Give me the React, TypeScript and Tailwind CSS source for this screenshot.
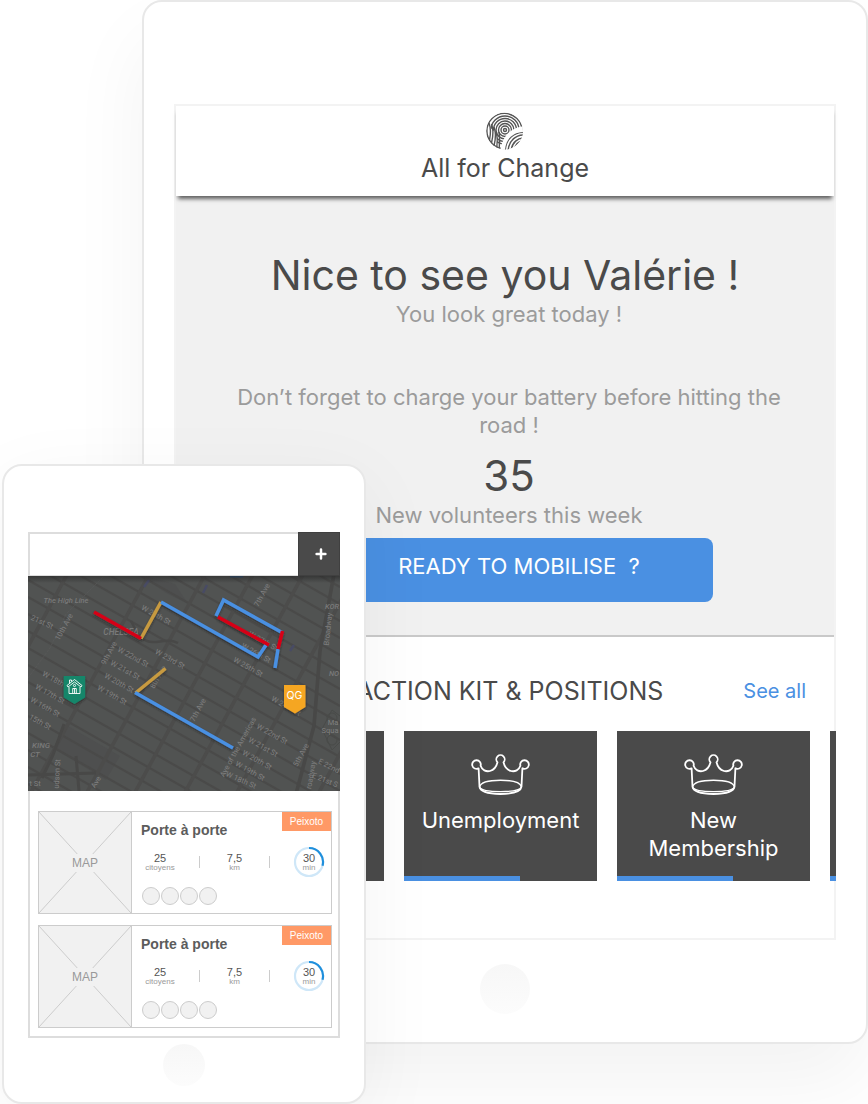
import React from "react";

const ui = "font-['Inter','Liberation_Sans',sans-serif]";

function FingerprintLogo() {
  return (
    <svg viewBox="0 0 38 38" className="h-[38px] w-[38px]" fill="none" aria-hidden="true">
      <defs>
        <clipPath id="disc">
          <circle cx="18.5" cy="19" r="18.5" />
        </clipPath>
        <clipPath id="upper">
          <path d="M0 0 H38 V16 C26 17 17 23 15 40 H11 V22 L0 12 Z" />
        </clipPath>
        <clipPath id="lobe">
          <path d="M38 20 C28 20 20 26 19 38 L38 38 Z" />
        </clipPath>
      </defs>
      <g clipPath="url(#disc)" stroke="#555" strokeWidth="1.4">
        <g clipPath="url(#upper)">
          {[1.5, 4, 6.5, 9, 11.5, 14].map((r) => (
            <circle key={r} cx="19" cy="18" r={r} />
          ))}
        </g>
        <circle cx="18.5" cy="19" r="17.6" />
        <path d="M3 11 C4.5 15 4.5 23 3.5 28 M5.5 12 C7.5 17 7 25 5.5 31 M8 15 C10 20 9.5 28 8 34 M10.5 20 C11.5 25 11.5 30 10.8 36 M13 20 C14 26 13.5 30 13.2 37" />
        <path d="M40 15 C26 16 17 23 15 40 L40 40 Z" fill="#fff" stroke="#fff" strokeWidth="2" />
        <g clipPath="url(#lobe)">
          <path d="M38 20 C28 20 20 26 19 38" strokeWidth="2" />
          <path d="M38 23 C30 23 23 28 22 39 M38 26 C32 26 26 30 25 39 M38 29 C33 29 29 32 28 39" />
        </g>
      </g>
    </svg>
  );
}

function Crown() {
  return (
    <svg viewBox="0 0 60 42" className="h-[42px] w-[60px]" fill="none" stroke="#fff" strokeWidth="1.8" strokeLinejoin="round" aria-hidden="true">
      <path d="M7.6 14.3 A4.3 4.3 0 1 1 9.6 11.8 C11 16 15 18 19 17 C23 16 25.5 12.5 26.5 8.3 A4.2 4.2 0 1 1 32.5 8.3 C33.5 12.5 36 16 40 17 C44 18 48 16 49.4 11.8 A4.3 4.3 0 1 1 51.4 14.3 L50.5 32.5 C50 37.5 41 40 29.5 40 C18 40 9 37.5 8.5 32.5 Z" />
      <path d="M8.5 33 C9.5 28.5 18 26.2 29.5 26.2 C41 26.2 49.5 28.5 50.5 33 C49 36.5 41 37.6 29.5 37.6 C18 37.6 10 36.5 8.5 33 Z" strokeWidth="1.4" />
    </svg>
  );
}

function KitCard({ label }: { label?: string }) {
  return (
    <article className="flex h-[150px] w-[193px] shrink-0 flex-col items-center bg-[#4a4a4a] pt-[23px]">
      <Crown />
      <p className="mt-[10px] w-full text-center text-[22px] leading-7 text-white whitespace-pre-line">{label}</p>
      <div className="mt-auto h-[5px] w-full">
        <div className="h-full w-3/5 bg-[#4a90e2]" />
      </div>
    </article>
  );
}

function Tablet() {
  return (
    <main className={`col-start-1 row-start-1 ml-[142px] flex h-fit flex-col items-center rounded-[20px] border-2 border-[#e8e8e8] bg-white px-[30px] pt-[102px] pb-7 text-[#4a4a4a] shadow-[0_40px_80px_rgba(0,0,0,0.05)] ${ui}`}>
      <div className="w-full border-2 border-[#f3f3f3]">
        <header className="relative flex h-[90px] flex-col items-center bg-white pt-[6px] shadow-[0_5px_4px_-2px_rgba(0,0,0,0.6)]">
          <FingerprintLogo />
          <p className="mt-[2px] text-[25px] leading-8">All for Change</p>
        </header>

        <section className="flex flex-col items-center border-b-2 border-[#c9c9c9] bg-[#f1f1f1] pt-[54px] pb-[33px] text-center text-[22px] leading-7 text-[#9b9b9b]">
          <h1 className="text-[41px] leading-[50px] text-[#4a4a4a]">Nice to see you Valérie !</h1>
          <p className="pl-2">You look great today !</p>
          <p className="mt-[55px] max-w-[590px] pl-2">Don’t forget to charge your battery before hitting the road !</p>
          <p className="mt-3 pl-2 text-[42px] leading-[50px] text-[#4a4a4a]">35</p>
          <p className="pl-2">New volunteers this week</p>
          <button className="mt-[9px] h-16 w-[416px] rounded-lg bg-[#4a90e2] pb-2 pl-7 text-[22px] whitespace-pre text-white">
            {"READY TO MOBILISE  ?"}
          </button>
        </section>

        <section className="h-[301px] bg-white pt-10">
          <div className="flex items-center justify-end gap-20 pr-7">
            <h2 className="text-[25px] leading-7">ACTION KIT &amp; POSITIONS</h2>
            <a href="#all" className="text-xl leading-7 text-[#4a90e2]">See all</a>
          </div>
          <div className="-mr-[2px] mt-[26px] flex justify-start gap-5 overflow-hidden pl-[15px]">
            <KitCard />
            <KitCard label="Unemployment" />
            <KitCard label={"New\nMembership"} />
            <KitCard />
          </div>
        </section>
      </div>
      <button aria-label="Tablet home" className="mt-6 h-[50px] w-[50px] rounded-full bg-linear-to-b from-[#f7f7f7] to-[#fcfcfc]" />
    </main>
  );
}

type Label = [string, number, number, number];

const streetLabels: Label[] = [
  ["21st St", 14, 46, 24],
  ["10th Ave", 36, 51, -62],
  ["W 24th St", 128, 39, 29],
  ["9th Ave", 81, 77, -62],
  ["W 22nd St", 105, 81, 29],
  ["W 23rd St", 142, 83, 29],
  ["W 21st St", 97, 94, 29],
  ["W 20th St", 91, 107, 29],
  ["W 19th St", 84, 119, 29],
  ["8th Ave", 130, 101, -60],
  ["W 18th St", 29, 105, 29],
  ["W 17th St", 22, 118, 29],
  ["W 16th St", 17, 131, 29],
  ["15th St", 12, 146, 29],
  ["udson St", 29, 198, -87],
  ["t St", 7, 207, 0],
  ["Ave", 68, 206, -60],
  ["7th Ave", 234, 19, -62],
  ["Broadway", 300, 53, -84],
  ["W 27th St", 235, 65, 29],
  ["W 26th St", 228, 77, 29],
  ["W 25th St", 220, 91, 29],
  ["W 24th St", 258, 130, 29],
  ["7th Ave", 170, 134, -62],
  ["Ave of the Americas", 210, 171, -61],
  ["W 22nd St", 244, 158, 29],
  ["W 21st St", 235, 171, 29],
  ["W 20th St", 229, 184, 29],
  ["W 19th St", 222, 195, 29],
  ["W 18th St", 213, 204, 24],
  ["5th Ave", 273, 179, -62],
  ["roadway", 283, 199, -80],
  ["E 22nd", 301, 190, 27],
  ["E 21st S", 297, 204, 22],
];

const areaLabels: [string, number, number, number][] = [
  ["The High Line", 38, 24, 7.5],
  ["CHELSEA", 93, 56, 8.5],
  ["KOR", 304, 30, 7.5],
  ["NO", 306, 97, 7.5],
  ["KING", 13, 169, 8],
  ["CT", 7, 178, 8],
];

const avenues = [-20, 62, 118, 166, 216, 268, 350, 404];

function RouteMap() {
  return (
    <svg viewBox="0 0 312 215" className="block w-full" role="img" aria-label="Route map" fontFamily="Roboto, 'Liberation Sans', sans-serif">
      <defs>
        <linearGradient id="mapTop" x1="0" y1="0" x2="0" y2="1">
          <stop offset="0" stopColor="#222" stopOpacity=".55" />
          <stop offset="1" stopColor="#222" stopOpacity="0" />
        </linearGradient>
        <filter id="drop" x="-20%" y="-20%" width="140%" height="150%">
          <feDropShadow dx="0" dy="1.5" stdDeviation="1" floodColor="#222" floodOpacity=".6" />
        </filter>
      </defs>
      <rect width="312" height="215" fill="#515352" />
      <path d="M110 -2 L147 8 L160 28 L138 17 Z M40 150 L92 180 L78 204 L28 174 Z" fill="#4e4f4f" />
      <g stroke="#4a4a49" strokeWidth="2.2">
        {Array.from({ length: 24 }, (_, i) => {
          const y = -166 + i * 17;
          return <line key={y} x1="0" y1={y} x2="312" y2={y + 177} />;
        })}
      </g>
      <g stroke="#4c4c4b" strokeWidth="3.6" fill="none">
        {avenues.map((x) => (
          <line key={x} x1={x - 61} y1="220" x2={x + 61} y2="-5" />
        ))}
        <path d="M306 -2 L292 75 L286 150 L268 218" stroke="#484847" />
        <path d="M103 45 C108 54 110 62 119 65 C128 69 138 61 150 67" strokeWidth="2.5" stroke="#484847" />
        <path d="M14 202 L25 179 L36 148 M0 199 L68 197 M48 180 L51 215" strokeWidth="3" stroke="#484847" />
      </g>
      <path d="M0 102 L22 72 L38 38 L76 0" stroke="#5a5b5a" strokeWidth=".6" strokeDasharray="3 1" fill="none" />
      <g stroke="#484b64" strokeWidth="2.5">
        <path d="M116 11 L121 4 M175 17 L179 9 M262 75 L266 69" />
        <path d="M202 0 L215 0" stroke="#31547b" strokeWidth="3" />
      </g>
      <g stroke="#494b49" strokeWidth="1" fill="none">
        <circle cx="304" cy="142" r="5" />
        <circle cx="304" cy="164" r="5" />
        <path d="M294 153 L304 134 L312 140 M294 153 L304 174 L312 166" />
      </g>
      <g fill="#808080" fontSize="7.5" textAnchor="middle">
        {streetLabels.map(([text, x, y, angle]) => (
          <text key={`${text}-${x}-${y}`} transform={`translate(${x} ${y}) rotate(${angle})`} dy="2.5">{text}</text>
        ))}
        {areaLabels.map(([text, x, y, size]) => (
          <text key={text} x={x} y={y + 3} fontSize={size} fontStyle="italic" fontWeight="500" fill="#7a7a7a">{text}</text>
        ))}
        <text x="305" y="149">Ma</text>
        <text x="302" y="157">Squa</text>
      </g>
      <g fill="none" strokeWidth="3.5" filter="url(#drop)">
        <path d="M113 62.5 L133 26" stroke="#c79a41" />
        <path d="M66 36 L113 62.5" stroke="#d60019" />
        <path d="M133 26 L230 81 L238 69" stroke="#4a90e2" />
        <path d="M188 40 L195.5 24 L254 56.5" stroke="#4a90e2" />
        <path d="M190 41 L241 69" stroke="#d60019" />
        <path d="M250 73 L247 92" stroke="#4a90e2" />
        <path d="M254.5 55 L250 73" stroke="#d60019" />
        <path d="M107.5 117 L137.5 92.5" stroke="#c79a41" />
        <path d="M107 116.5 L205 172" stroke="#4a90e2" />
      </g>
      <g filter="url(#drop)">
        <path d="M35.7 100 H57.2 V121.5 L46.5 128 L35.7 121.5 Z" fill="#12866b" />
        <path d="M256 109 H277.5 V131 L267 137.5 L256 131 Z" fill="#f5a623" />
      </g>
      <g fill="none" stroke="#fff" strokeWidth=".9">
        <path d="M39 109.5 L46.5 103.5 L54 109.5 L53 111 L46.5 106 L40 111 Z" />
        <path d="M41 111 V117.5 H52 V111 M41.5 107 V104 H43.5 V105.5 M44.7 117.5 V112.5 H48.3 V117.5" />
        <circle cx="46.5" cy="109.5" r="1.1" />
        <path d="M46.5 113 V117" />
      </g>
      <text x="266.5" y="123" textAnchor="middle" fontSize="10.5" fill="#fff" fontFamily="Inter, sans-serif">QG</text>
      <rect width="312" height="7" fill="url(#mapTop)" />
    </svg>
  );
}

function Stat({ value, unit }: { value: string; unit: string }) {
  return (
    <div className="flex w-10 flex-col items-center">
      <span className="text-[11px] leading-[11px] text-[#555]">{value}</span>
      <span className="text-[8px] leading-[8px] text-[#999]">{unit}</span>
    </div>
  );
}

function DurationRing() {
  return (
    <div className="grid h-8 w-10 place-items-center">
      <svg viewBox="0 0 32 32" className="col-start-1 row-start-1 h-8 w-8" fill="none" strokeWidth="2.2" aria-hidden="true">
        <circle cx="16" cy="16" r="14" stroke="#cfe7f8" />
        <path d="M16 2 A14 14 0 0 1 29.5 19.8" stroke="#1f8fdc" />
      </svg>
      <div className="col-start-1 row-start-1">
        <Stat value="30" unit="min" />
      </div>
    </div>
  );
}

function VisitCard() {
  return (
    <article className="flex h-[103px] border border-[#ccc] bg-white">
      <div className="grid w-[93px] shrink-0 place-items-center border-r border-[#ccc] bg-[#f1f1f1]">
        <svg viewBox="0 0 92 101" preserveAspectRatio="none" className="col-start-1 row-start-1 h-[101px] w-[92px]" stroke="#ccc" aria-hidden="true">
          <path d="M0 0 L92 101 M92 0 L0 101" />
        </svg>
        <span className="col-start-1 row-start-1 bg-[#f1f1f1] px-0.5 py-[3px] text-xs leading-3 text-[#999]">MAP</span>
      </div>
      <div className="flex min-w-0 flex-1 flex-col">
        <div className="flex items-start justify-between pl-[9px]">
          <h3 className="pt-[10px] text-sm leading-4 font-bold text-[#5c5c5c]">Porte à porte</h3>
          <span className="h-[19px] w-[49px] bg-[#ff9966] text-center text-[10px] leading-5 text-white">Peixoto</span>
        </div>
        <div className="mt-2 flex items-center justify-between pr-[2px] pl-2">
          <Stat value="25" unit="citoyens" />
          <span className="ml-1 h-3 w-px bg-[#ccc]" />
          <Stat value="7,5" unit="km" />
          <span className="mr-1 h-3 w-px bg-[#ccc]" />
          <DurationRing />
        </div>
        <div className="mt-[9px] flex gap-px pl-[10px]">
          {[0, 1, 2, 3].map((i) => (
            <span key={i} className="h-[18px] w-[18px] rounded-full border border-[#ccc] bg-[#f1f1f1]" />
          ))}
        </div>
      </div>
    </article>
  );
}

function Phone() {
  return (
    <aside className="z-10 col-start-1 row-start-1 mt-[464px] ml-[2px] flex h-fit w-[364px] flex-col items-center rounded-[20px] border-2 border-[#e8e8e8] bg-white px-6 pt-[66px] pb-[16px] font-['Liberation_Sans',Arial,sans-serif] shadow-[0_20px_80px_rgba(0,0,0,0.05)]">
      <div className="flex w-full">
        <input aria-label="Search" className="h-11 min-w-0 flex-1 border-2 border-r-0 border-b border-[#ddd] bg-white px-3 text-sm outline-none" />
        <button aria-label="Add" className="grid h-11 w-[42px] place-items-center border border-[#404040] bg-[#4a4a4a] pl-[3px]">
          <svg viewBox="0 0 12 12" className="h-3 w-3" stroke="#fff" strokeWidth="2.5" strokeLinecap="round" aria-hidden="true">
            <path d="M6 1.6 V10.4 M1.6 6 H10.4" />
          </svg>
        </button>
      </div>
      <div className="w-full">
        <RouteMap />
      </div>
      <div className="flex w-full flex-col gap-[11px] border-2 border-t-0 border-[#ddd] pt-5 pr-[6px] pb-2 pl-2">
        <VisitCard />
        <VisitCard />
      </div>
      <button aria-label="Phone home" className="mt-[6px] h-[42px] w-[42px] rounded-full bg-linear-to-b from-[#f7f7f7] to-[#fcfcfc]" />
    </aside>
  );
}

export default function App() {
  return (
    <div className="grid min-h-screen w-full grid-cols-1 overflow-hidden bg-white">
      <Tablet />
      <Phone />
    </div>
  );
}
